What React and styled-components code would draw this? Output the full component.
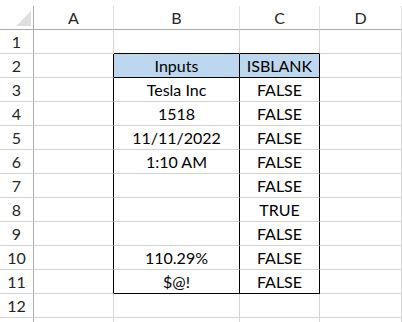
import React from "react";
import styled, { createGlobalStyle } from "styled-components";

const GRID = "#d4d4d4";
const EDGE = "#ababab";
const HEAD_SEP = "#e1e1e1";
const INK = "#000000";

const GlobalStyle = createGlobalStyle`
  body {
    margin: 0;
    background: #ffffff;
    font-family: Lato, "Liberation Sans", sans-serif;
  }
`;

const Sheet = styled.div`
  display: grid;
  grid-template-columns: 34px 80px 126px 80px 82px;
  grid-auto-rows: 24px;
  width: 402px;
  height: 322px;
  padding-top: 6px;
  box-sizing: border-box;
  overflow: hidden;
  font-size: 16px;
`;

const Corner = styled.div`
  display: flex;
  justify-content: flex-end;
  align-items: flex-end;
  padding: 0 2px 3px 0;
  box-sizing: border-box;
  border-right: 1px solid ${EDGE};
  border-bottom: 1px solid ${EDGE};
`;

const SelectAll = styled.div`
  width: 15px;
  height: 15px;
  background: #dfdfdf;
  clip-path: polygon(100% 0, 100% 100%, 0 100%);
`;

const ColHead = styled.div`
  display: flex;
  align-items: center;
  justify-content: center;
  box-sizing: border-box;
  border-right: 1px solid ${HEAD_SEP};
  border-bottom: 1px solid ${EDGE};
  color: #262626;
`;

const RowHead = styled.div`
  display: flex;
  align-items: center;
  justify-content: center;
  box-sizing: border-box;
  border-right: 1px solid ${EDGE};
  border-bottom: 1px solid ${GRID};
  color: #262626;
`;

const Cell = styled.div`
  display: flex;
  align-items: center;
  justify-content: center;
  box-sizing: border-box;
  border-right: 1px solid ${(p) => (p.$right ? INK : GRID)};
  border-bottom: 1px solid ${(p) => (p.$bottom ? INK : GRID)};
  background: ${(p) => p.$fill || "transparent"};
  color: #000000;
  white-space: nowrap;
`;

const columns = ["A", "B", "C", "D"];

const values = {
  2: ["Inputs", "ISBLANK"],
  3: ["Tesla Inc", "FALSE"],
  4: ["1518", "FALSE"],
  5: ["11/11/2022", "FALSE"],
  6: ["1:10 AM", "FALSE"],
  7: ["", "FALSE"],
  8: ["", "TRUE"],
  9: ["", "FALSE"],
  10: ["110.29%", "FALSE"],
  11: ["$@!", "FALSE"],
};

const inTable = (row) => row >= 2 && row <= 11;

export default function App() {
  const rows = Array.from({ length: 12 }, (_, i) => i + 1);

  return (
    <>
      <GlobalStyle />
      <Sheet>
        <Corner>
          <SelectAll />
        </Corner>
        {columns.map((c) => (
          <ColHead key={c}>{c}</ColHead>
        ))}
        {rows.map((row) => {
          const data = values[row] || ["", ""];
          const boxed = inTable(row);
          const edgeBelow = row === 1 || row === 2 || row === 11;
          const fill = row === 2 ? "#bdd7ee" : null;
          return (
            <React.Fragment key={row}>
              <RowHead>{row}</RowHead>
              <Cell $right={boxed} />
              <Cell $right={boxed} $bottom={edgeBelow} $fill={fill}>
                {data[0]}
              </Cell>
              <Cell $right={boxed} $bottom={edgeBelow} $fill={fill}>
                {data[1]}
              </Cell>
              <Cell />
            </React.Fragment>
          );
        })}
        {/* next row, only its top few pixels show below row 12 */}
        <RowHead />
        <Cell />
        <Cell />
        <Cell />
        <Cell />
      </Sheet>
    </>
  );
}
